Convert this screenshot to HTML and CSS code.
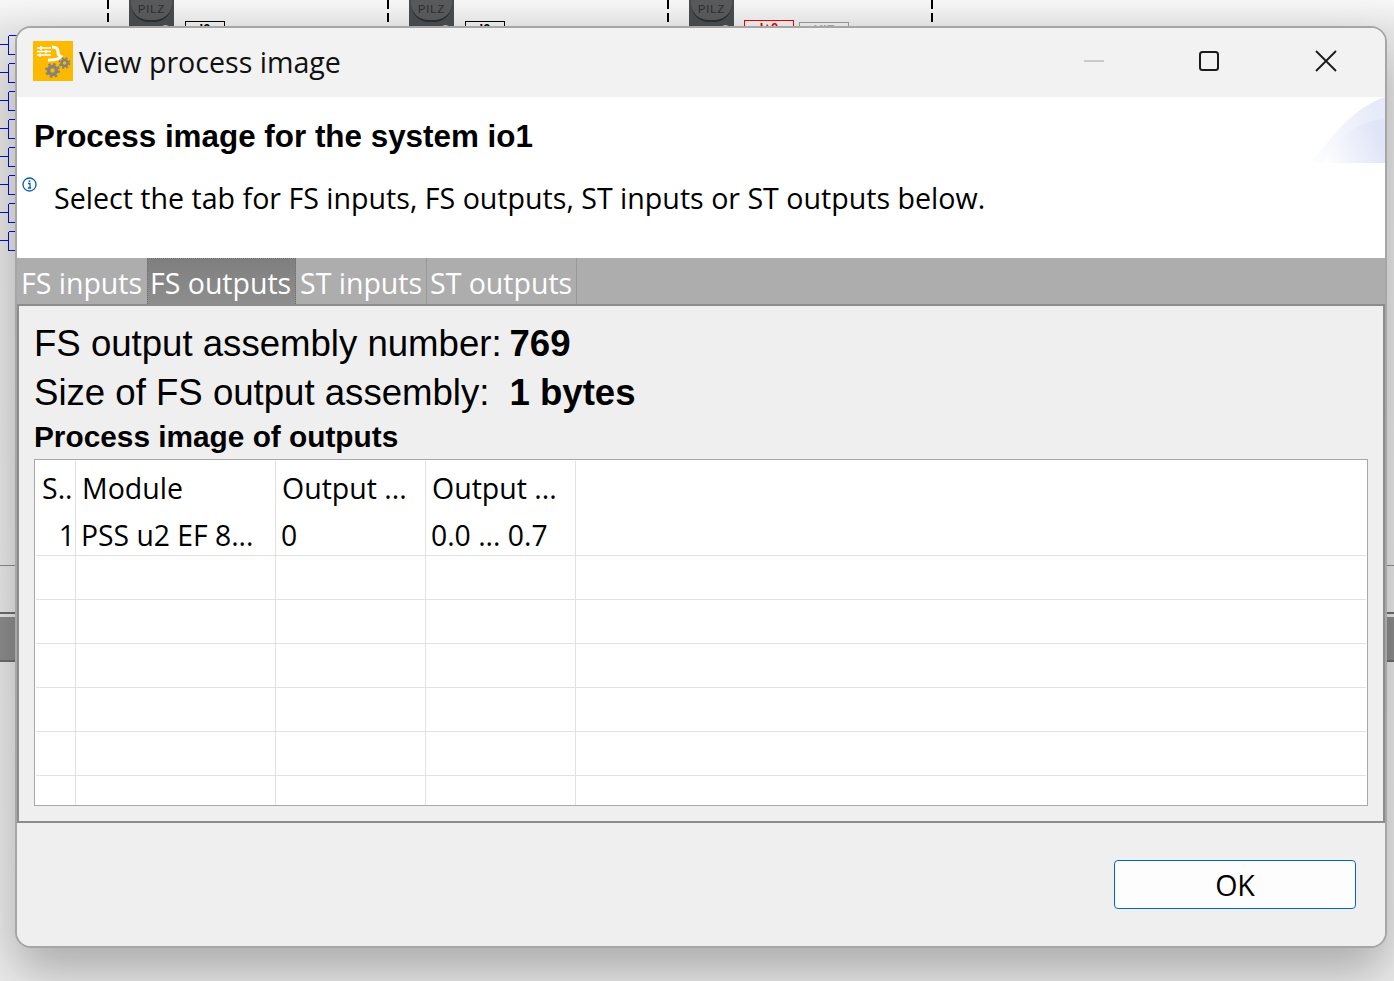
FILE: index.html
```html
<!DOCTYPE html>
<html lang="en">
<head>
<meta charset="utf-8">
<title>View process image</title>
<link rel="stylesheet" href="styles.css">
</head>
<body>
<div class="desktop">
  <i class="dash d1"></i><i class="dash d2"></i><i class="dash d3"></i><i class="dash d4"></i>
  <div class="plc p1"><span>PILZ</span></div>
  <div class="plc p2"><span>PILZ</span></div>
  <div class="plc p3"><span>PILZ</span></div>
  <div class="tag t1">I0</div>
  <div class="tag t2">I0</div>
  <div class="tag t3">I+0</div>
  <div class="tag t4">HIZ</div>
  <svg class="wires" width="20" height="230" viewBox="0 0 20 230"><path d="M8.500 6.500H17M8.500 6.500V25.500H17M0 15.500H8M8.500 34.500H17M8.500 34.500V53.500H17M0 43.500H8M8.500 62.500H17M8.500 62.500V81.500H17M0 71.500H8M8.500 90.500H17M8.500 90.500V109.500H17M0 99.500H8M8.500 118.500H17M8.500 118.500V137.500H17M0 127.500H8M8.500 146.500H17M8.500 146.500V165.500H17M0 155.500H8M8.500 174.500H17M8.500 174.500V193.500H17M0 183.500H8M8.500 202.500H17M8.500 202.500V221.500H17M0 211.500H8" fill="none" stroke="#0a0ad8" stroke-width="1" shape-rendering="crispEdges"/></svg>
  <i class="band b1"></i><i class="band b2"></i>
</div>

<main class="window">
  <header class="titlebar">
    <svg class="appicon" width="40" height="40" viewBox="0 0 40 40">
      <rect width="40" height="40" fill="#fdb900"/>
      <path d="M4 7H18M4 10.500H18M4 14H18" stroke="#fff" stroke-width="1.400"/>
      <path d="M8 5V9M13 9V12.500M7 12.500V16" stroke="#fff" stroke-width="1.600"/>
      <path d="M19 6c4 0 6 2 6 4.500s0 3.500 3 5c-2 3-8 3.500-13 3.500" fill="none" stroke="#fff" stroke-width="3"/>
      <g fill="none" stroke="#85827c">
        <circle cx="19.500" cy="29.500" r="4" stroke-width="3.500"/>
        <circle cx="19.500" cy="29.500" r="6.500" stroke-width="2" stroke-dasharray="2.500 2.600"/>
        <circle cx="31.500" cy="22" r="3" stroke-width="2.600"/>
        <circle cx="31.500" cy="22" r="5" stroke-width="1.800" stroke-dasharray="2 2"/>
      </g>
    </svg>
    <h1 class="wintitle">View process image</h1>
    <div class="controls">
      <svg class="ctl ctl-min" width="22" height="22" viewBox="0 0 22 22"><path d="M1 11H21" stroke="#bdbdbd" stroke-width="1.500"/></svg>
      <svg class="ctl ctl-max" width="22" height="22" viewBox="0 0 22 22"><rect x="2" y="2" width="18" height="18" rx="2.500" fill="none" stroke="#1a1a1a" stroke-width="2"/></svg>
      <svg class="ctl" width="22" height="22" viewBox="0 0 22 22"><path d="M1 1L21 21M21 1L1 21" stroke="#1a1a1a" stroke-width="1.800"/></svg>
    </div>
  </header>

  <section class="banner">
    <svg class="swoosh" width="76" height="66" viewBox="0 0 76 66">
      <defs><linearGradient id="sw" x1="0" y1="1" x2="1" y2="0.700"><stop offset="0" stop-color="#fff"/><stop offset="1" stop-color="#dfe4f7"/></linearGradient></defs>
      <path d="M0 66C18 50 36 14 76 0V66Z" fill="url(#sw)" opacity=".75"/>
      <path d="M14 66C26 42 48 24 76 22V66Z" fill="url(#sw)"/>
    </svg>
    <h2 class="bannerhead">Process image for the system io1</h2>
    <div class="bannermsg">
      <svg class="info" width="15" height="15" viewBox="0 0 15 15"><circle cx="7.500" cy="7.500" r="6.500" fill="#fff" stroke="#0b5ea8" stroke-width="1.300"/><path d="M6 6.500H8V11H9.200M5.800 11H8" fill="none" stroke="#0b5ea8" stroke-width="1.300"/><rect x="6.700" y="3.400" width="1.600" height="1.600" fill="#0b5ea8"/></svg>
      <p class="msg">Select the tab for FS inputs, FS outputs, ST inputs or ST outputs below.</p>
    </div>
  </section>

  <nav class="tabs">
    <span class="tab tab-a">FS inputs</span>
    <span class="tab tab-b selected">FS outputs</span>
    <span class="tab tab-c">ST inputs</span>
    <span class="tab tab-d">ST outputs</span>
  </nav>

  <section class="panel">
    <div class="inforow"><span class="lab">FS output assembly number:</span><strong class="val">769</strong></div>
    <div class="inforow"><span class="lab">Size of FS output assembly:</span><strong class="val">1 bytes</strong></div>
    <h3 class="subhead">Process image of outputs</h3>
    <div class="tablewrap">
      <table class="grid">
        <colgroup><col class="c1"><col class="c2"><col class="c3"><col class="c3"><col></colgroup>
        <thead><tr><th>S..</th><th>Module</th><th>Output ...</th><th>Output ...</th><th></th></tr></thead>
        <tbody>
          <tr class="first"><td class="num">1</td><td>PSS u2 EF 8...</td><td>0</td><td>0.0 ... 0.7</td><td></td></tr>
          <tr><td></td><td></td><td></td><td></td><td></td></tr>
          <tr><td></td><td></td><td></td><td></td><td></td></tr>
          <tr><td></td><td></td><td></td><td></td><td></td></tr>
          <tr><td></td><td></td><td></td><td></td><td></td></tr>
          <tr><td></td><td></td><td></td><td></td><td></td></tr>
          <tr class="last"><td></td><td></td><td></td><td></td><td></td></tr>
        </tbody>
      </table>
    </div>
  </section>

  <footer class="footer"><button class="ok" type="button">OK</button></footer>
</main>
</body>
</html>
```
FILE: styles.css
```css
* { box-sizing: border-box; }
html, body { margin: 0; height: 100%; }
body {
  width: 1394px; height: 981px; overflow: hidden; position: relative;
  background: linear-gradient(#f7f7f7, #e8e8e8 30px, #ececec);
  font-family: "Open Sans", sans-serif; color: #000;
}
.desktop { position: absolute; inset: 0; }
.dash { position: absolute; top: 0; width: 2px; height: 26px; background: repeating-linear-gradient(#000 0 9px, transparent 9px 13px); }
.d1 { left: 107px; } .d2 { left: 387px; } .d3 { left: 667px; } .d4 { left: 931px; }
.plc { position: absolute; top: 0; width: 45px; height: 28px; background: #484c4f; text-align: center; overflow: hidden; }
.plc::before { content: ""; position: absolute; left: 2px; top: -14px; width: 41px; height: 34px; background: #585a5c; border-bottom: 2px solid #2c2e30; border-radius: 0 0 18px 18px; }
.plc::after { content: ""; position: absolute; right: 5px; top: 25px; width: 7px; height: 7px; background: #c4c4c4; border-radius: 50%; }
.plc span { position: relative; z-index: 1; display: block; font: 11px/18px "Liberation Sans", sans-serif; letter-spacing: 1px; color: #2c2c2c; }
.p1 { left: 129px; } .p2 { left: 409px; } .p3 { left: 689px; }
.tag { position: absolute; top: 21px; height: 12px; border: 1px solid #000; font: bold 13px/13px "Liberation Sans", sans-serif; text-align: center; overflow: hidden; background: #eee; }
.t1 { left: 185px; width: 40px; } .t2 { left: 465px; width: 40px; }
.t3 { left: 744px; width: 50px; top: 20px; border-color: #e00; color: #e00; }
.t4 { left: 799px; width: 50px; top: 22px; border-color: #999; color: #aaa; }
.wires { position: absolute; left: 0; top: 29px; }
.band { position: absolute; left: 0; width: 1394px; }
.b1 { top: 565px; height: 49px; border-top: 1px solid #8e8e8e; border-bottom: 2px solid #6e6e6e; }
.b2 { top: 617px; height: 45px; background: #8e8e8e; border-bottom: 2px solid #6e6e6e; }

.window {
  position: absolute; left: 15px; top: 26px; width: 1372px; height: 922px;
  display: flex; flex-direction: column;
  background: #efefef; border: 2px solid #a6a6a6; border-radius: 16px; overflow: hidden;
  box-shadow: 0 24px 50px 0 rgba(0, 0, 0, .28);
}
.titlebar { flex: 0 0 69px; display: flex; align-items: center; padding-left: 16px; background: #f2f2f2; }
.appicon { flex: none; margin-bottom: 3px; }
.wintitle { margin: 0 0 2px 6px; font: 400 28.600px/40px "Open Sans", sans-serif; color: #111; }
.controls { margin-left: auto; margin-bottom: 3px; display: flex; padding-right: 48px; }
.ctl { display: block; margin-left: 95px; }
.ctl-min { margin-left: 0; }
.ctl-max { margin-left: 93px; }

.banner { flex: 0 0 161px; position: relative; background: #fff; display: flex; flex-direction: column; }
.swoosh { position: absolute; right: 0; top: 0; }
.bannerhead { margin: 20px 0 0 17px; font: bold 31.400px/40px "Liberation Sans", sans-serif; }
.bannermsg { display: flex; align-items: flex-start; margin-top: 20px; padding-left: 5px; }
.info { flex: none; }
.msg { margin: 3px 0 0 17px; font: 400 28.600px/36px "Open Sans", sans-serif; color: #000; }

.tabs { flex: 0 0 46px; display: flex; background: #adadad; }
.tab { display: block; height: 46px; padding: 5px 0 0 4px; font: 400 28.500px/40px "Open Sans", sans-serif; color: #fff; border-right: 1px solid #999; white-space: nowrap; }
.tab-a { width: 130px; border-right: 0; }
.tab-b { width: 149px; background: linear-gradient(#7f7f7f, #8e8e8e); border: 1px dotted #6f6f6f; border-bottom: 0; padding: 4px 0 0 2px; }
.tab-c { width: 131px; padding-left: 4px; }
.tab-d { width: 150px; padding-left: 3px; }

.panel { flex: 0 0 518px; background: #efefef; border: 2px solid #8c8c8c; padding: 13px 15px 15px 15px; display: flex; flex-direction: column; }
.inforow { display: flex; align-items: center; height: 49px; }
.lab { width: 475.500px; font: 400 36.600px/49px "Liberation Sans", sans-serif; white-space: nowrap; }
.val { font: bold 36.600px/49px "Liberation Sans", sans-serif; }
.subhead { margin: 0; font: bold 29.800px/40px "Liberation Sans", sans-serif; }
.tablewrap { margin-top: 2px; height: 347px; border: 1px solid #a8a8a8; background: #fff; padding: 1px; }
.grid { width: 100%; height: 100%; border-collapse: separate; border-spacing: 0; table-layout: fixed; font: 400 28.500px/36px "Open Sans", sans-serif; }
.c1 { width: 40px; } .c2 { width: 200px; } .c3 { width: 150px; }
.grid th, .grid td { padding: 0; border-right: 1px solid #e2e2e2; border-bottom: 1px solid #e2e2e2; font-weight: 400; text-align: left; white-space: nowrap; overflow: hidden; height: 44px; }
.grid th:last-child, .grid td:last-child { border-right: 0; }
.grid thead th { height: 52px; border-bottom: 0; padding: 2px 0 0 6px; }
.grid tr.first td { height: 43px; padding: 2px 0 0 5px; font-size: 28.300px; }
.grid tr.first td.num { text-align: right; padding: 2px 0 0 0; }
.grid tr.last td { height: 29px; border-bottom: 0; }

.footer { flex: 1; display: flex; justify-content: flex-end; align-items: flex-start; padding: 37px 29px 0 0; background: #efefef; }
.ok { width: 242px; height: 49px; background: #fdfdfd; border: 1.500px solid #0067c0; border-radius: 4px; font: 400 28.600px/40px "Open Sans", sans-serif; color: #000; padding: 1px 0 0; }
```
